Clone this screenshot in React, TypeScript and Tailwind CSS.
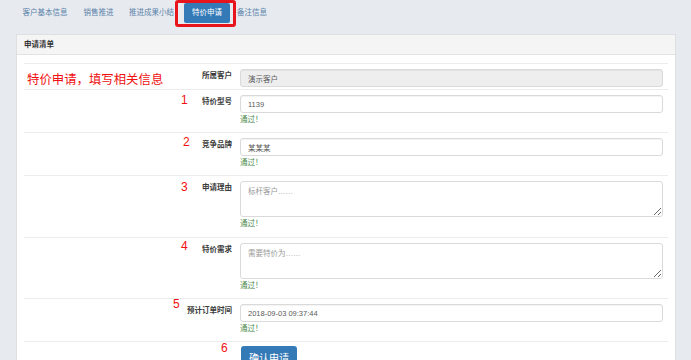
import React from 'react';

const font = "font-['Liberation_Sans','Noto_Sans_CJK_SC',sans-serif]";

const tabs = [
  { label: '客户基本信息', w: 'w-[60px] ml-[15px]' },
  { label: '销售推进', w: 'w-[45px] ml-[1px]' },
  { label: '推进成果小结', w: 'w-[59px] ml-[1px]' },
];

type RowProps = {
  label: string;
  children: React.ReactNode;
  help?: boolean;
  pad?: string;
  mark?: React.ReactNode;
};

const Help = () => <div className="mt-[2px] h-[10px] leading-[10px] text-[7.5px] text-[#4a8a4b]">通过！</div>;

const Row: React.FC<RowProps> = ({ label, children, help, pad = 'pb-[7px]', mark }) => (
  <div className={`relative flex border-t border-[#ececec] pt-[5px] ${pad}`}>
    {mark}
    <div className="w-[208px] shrink-0 pt-[2px] text-right text-[7.5px] font-bold leading-[10px] text-[#3a3a3a]">{label}</div>
    <div className="ml-[8px] mr-[5px] flex-1">
      {children}
      {help && <Help />}
    </div>
  </div>
);

const Num: React.FC<{ n: string; cls: string }> = ({ n, cls }) => (
  <span className={`absolute text-[12px] leading-[14px] text-[#f01010] ${cls}`}>{n}</span>
);

const inputCls =
  'block h-[18px] w-full rounded-[3px] border border-[#dadada] px-[7px] text-[7.5px] text-[#5a5a5a] outline-none shadow-[inset_0_1px_1px_rgba(0,0,0,0.05)]';
const areaCls =
  'block h-[36px] w-full resize-y rounded-[3px] border border-[#dadada] px-[7px] pt-[5px] text-[7.5px] leading-[10px] text-[#555] outline-none placeholder:text-[#999]';

export default function App() {
  return (
    <div className={`h-[360px] w-[691px] overflow-hidden bg-[#e7eaee] ${font}`}>
      {/* Tabs */}
      <div className="flex pt-[3px] text-[7.5px]">
        {tabs.map((t) => (
          <div key={t.label} className={`flex h-[20px] items-center justify-center text-[#5a82ab] ${t.w}`}>
            {t.label}
          </div>
        ))}
        <div className="relative ml-[3px] flex h-[20px] w-[46px] items-center justify-center rounded-[2px] bg-[#337ab7] text-white">
          特价申请
          <span className="absolute -bottom-[4px] -left-[9px] -right-[6px] -top-[3px] rounded-[3px] border-[3px] border-[#e8141b]" />
        </div>
        <div className="flex h-[20px] w-[44px] items-center justify-center text-[#5a82ab]">备注信息</div>
      </div>

      {/* Panel */}
      <div className="ml-[16px] mr-[15px] mt-[11px] h-[400px] border border-[#dde0e3] bg-white">
        <div className="flex h-[20px] items-center border-b border-[#e3e3e3] bg-[#f5f5f5] px-[7px] text-[7.5px] font-bold text-[#333]">
          申请清单
        </div>
        <div className="px-[7px] pt-[8px]">
          <Row
            label="所属客户"
            pad="pb-[2px]"
            mark={<span className="absolute left-[3px] top-[8px] text-[12.4px] leading-[16px] text-[#f01010]">特价申请，填写相关信息</span>}
          >
            <input readOnly value="演示客户" className={`${inputCls} bg-[#eee]`} />
          </Row>
          <Row label="特价型号" help mark={<Num n="1" cls="left-[157px] top-[3px]" />}>
            <input readOnly value="1139" className={inputCls} />
          </Row>
          <Row label="竞争品牌" help mark={<Num n="2" cls="left-[159px] top-[2px]" />}>
            <input readOnly value="某某某" className={inputCls} />
          </Row>
          <Row label="申请理由" help pad="pb-[8px]" mark={<Num n="3" cls="left-[157px] top-[4px]" />}>
            <textarea readOnly placeholder="标杆客户……" className={areaCls} />
          </Row>
          <Row label="特价需求" help mark={<Num n="4" cls="left-[157px] top-[1px]" />}>
            <textarea readOnly placeholder="需要特价为……" className={areaCls} />
          </Row>
          <Row label="预计订单时间" help mark={<Num n="5" cls="left-[149px] -top-[2px]" />}>
            <input readOnly value="2018-09-03 09:37:44" className={inputCls} />
          </Row>
          <div className="relative flex border-t border-[#ececec] pt-[4px]">
            <Num n="6" cls="left-[197px] -top-[1px]" />
            <div className="w-[208px] shrink-0" />
            <button className="ml-[9px] h-[24px] w-[56px] rounded-[3px] bg-[#337ab7] text-[10px] text-white">确认申请</button>
          </div>
        </div>
      </div>
    </div>
  );
}
